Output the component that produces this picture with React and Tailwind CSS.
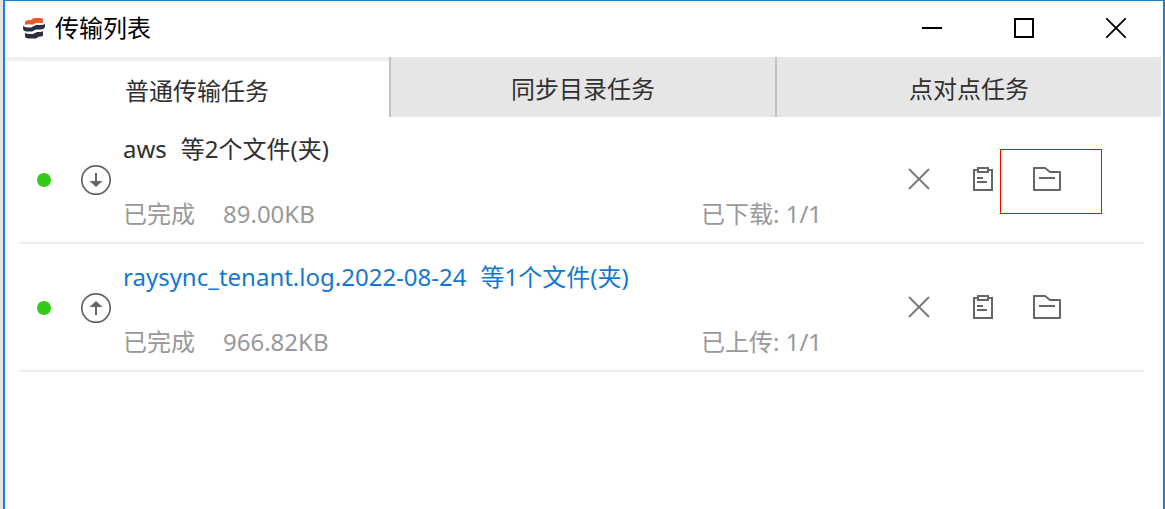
import { useState } from 'react';
import clsx from 'clsx';

const TABS = [
  { id: 'normal', label: '普通传输任务' },
  { id: 'sync', label: '同步目录任务' },
  { id: 'p2p', label: '点对点任务' },
];

const TASKS = [
  {
    id: 1,
    name: 'aws',
    suffix: '等2个文件(夹)',
    direction: 'down',
    status: '已完成',
    size: '89.00KB',
    progress: '已下载: 1/1',
    marked: true,
  },
  {
    id: 2,
    name: 'raysync_tenant.log.2022-08-24',
    suffix: '等1个文件(夹)',
    direction: 'up',
    status: '已完成',
    size: '966.82KB',
    progress: '已上传: 1/1',
    active: true,
  },
];

function Logo() {
  return (
    <svg width="24" height="24" viewBox="0 0 24 24" aria-hidden="true">
      <path d="M3 9V6Q4 4 7 4H9L12 2H19Q21 2 21 4V7H14L11 8.5H8Q5 8 3 9Z" fill="#ee5a20" />
      <path d="M1 10Q4 12 9 11.5L14 9H19Q21 9 23 8V11Q22 13.5 18 13.5H14L10 15.5H4Q1 15 1 12Z" fill="#292f40" />
      <path d="M3 17Q5 18 8 18H11L15 16H18Q20 16 21 15V19Q21 20.5 17 20.5L14 22.5H7Q3 22.5 3 20Z" fill="#292f40" />
    </svg>
  );
}

function DirectionIcon({ direction }) {
  return (
    <svg className="shrink-0" width="32" height="32" viewBox="0 0 32 32" fill="none" stroke="#666" aria-hidden="true">
      <circle cx="16" cy="16" r="14.2" strokeWidth="1.7" />
      {direction === 'down' ? (
        <>
          <path d="M16 9v12" strokeWidth="2" />
          <path d="M9.5 17h13L16 23z" fill="#666" stroke="none" />
        </>
      ) : (
        <>
          <path d="M16 11v12" strokeWidth="2" />
          <path d="M9.5 15h13L16 9z" fill="#666" stroke="none" />
        </>
      )}
    </svg>
  );
}

function DeleteIcon() {
  return (
    <svg width="32" height="32" viewBox="0 0 32 32" fill="none" stroke="#777" strokeWidth="1.8">
      <path d="M6 6l20 20M26 6L6 26" />
    </svg>
  );
}

function DetailIcon() {
  return (
    <svg width="32" height="32" viewBox="0 0 32 32" fill="none" stroke="#666" strokeWidth="2">
      <path d="M11 7H7v20h18V7h-4" />
      <path d="M11 5h10v4H11z" />
      <path d="M10 15h6M10 19h10" />
    </svg>
  );
}

function FolderIcon() {
  return (
    <svg width="32" height="32" viewBox="0 0 32 32" fill="none" stroke="#666" strokeWidth="2">
      <path d="M3 5h11l5 4h10v18H3z" strokeLinejoin="round" />
      <path d="M8 15h16" />
    </svg>
  );
}

function ActionButton({ label, marked, children }) {
  return (
    <button type="button" aria-label={label} className="relative flex h-16 w-16 items-center justify-center">
      {children}
      {marked && <span className="absolute -left-[15px] top-0.5 h-[65px] w-[102px] border border-[#ff0000]" />}
    </button>
  );
}

function TitleBar() {
  return (
    <header className="flex h-14 items-center justify-between pb-0.5 pl-[17px] pr-[15px] text-black">
      <div className="flex items-center gap-[9px]">
        <Logo />
        <h1 className="text-2xl">传输列表</h1>
      </div>
      <div className="flex gap-7">
        <button type="button" aria-label="最小化" className="flex h-12 w-16 items-center justify-center">
          <svg width="20" height="20" viewBox="0 0 20 20" fill="none" stroke="currentColor" strokeWidth="2">
            <path d="M0 10h20" />
          </svg>
        </button>
        <button type="button" aria-label="最大化" className="flex h-12 w-16 items-center justify-center">
          <svg width="20" height="20" viewBox="0 0 20 20" fill="none" stroke="currentColor" strokeWidth="2">
            <path d="M1 1h18v18H1z" />
          </svg>
        </button>
        <button type="button" aria-label="关闭" className="flex h-12 w-16 items-center justify-center">
          <svg width="20" height="20" viewBox="0 0 20 20" fill="none" stroke="currentColor" strokeWidth="1.8">
            <path d="M0 0l20 20M20 0L0 20" />
          </svg>
        </button>
      </div>
    </header>
  );
}

function TaskRow({ task }) {
  return (
    <li className="flex h-32 items-center border-b-2 border-[#eeeeee] pl-[18px]">
      <div className="mr-[11px] flex items-center gap-[29px] pt-0.5">
        <span className="h-3.5 w-3.5 rounded-full bg-[#32c814]" />
        <DirectionIcon direction={task.direction} />
      </div>
      <div className="flex min-w-0 flex-1 flex-col gap-[33px] pt-[5px]">
        <p className={clsx('flex gap-3.5 text-2xl', task.active ? 'text-[#1478d2]' : 'text-[#303030]')}>
          <span>{task.name}</span>
          <span>{task.suffix}</span>
        </p>
        <div className="flex text-2xl text-[#999999]">
          <span className="mr-7">{task.status}</span>
          <span>{task.size}</span>
          <span className="ml-auto w-[186px]">{task.progress}</span>
        </div>
      </div>
      <div className="mr-[65px] flex">
        <ActionButton label="删除">
          <DeleteIcon />
        </ActionButton>
        <ActionButton label="详情">
          <DetailIcon />
        </ActionButton>
        <ActionButton label="打开文件夹" marked={task.marked}>
          <FolderIcon />
        </ActionButton>
      </div>
    </li>
  );
}

export default function App() {
  const [tab, setTab] = useState('normal');

  return (
    <div className="flex min-h-screen bg-linear-to-r from-[#e4e4e4] to-[#cfcfcf] pl-[3px] font-['Noto_Sans','Noto_Sans_CJK_SC',sans-serif]">
      <div className="flex-1 border-x-2 border-t border-[#1982d2] bg-white">
        <TitleBar />
        <nav role="tablist" className="grid grid-cols-[384fr_386fr_386fr] pr-0.5">
          {TABS.map((t) => (
            <button
              key={t.id}
              type="button"
              role="tab"
              aria-selected={tab === t.id}
              onClick={() => setTab(t.id)}
              className={clsx(
                'h-[60px] pt-[3px] text-2xl text-[#303030]',
                tab === t.id ? 'border-t-4 border-[#efefef] bg-white' : 'border-l-2 border-[#c2c2c2] bg-[#e6e6e6]'
              )}
            >
              {t.label}
            </button>
          ))}
        </nav>
        <ul className="-mt-px ml-3.5 mr-[19px]">
          {TASKS.map((task) => (
            <TaskRow key={task.id} task={task} />
          ))}
        </ul>
      </div>
    </div>
  );
}
